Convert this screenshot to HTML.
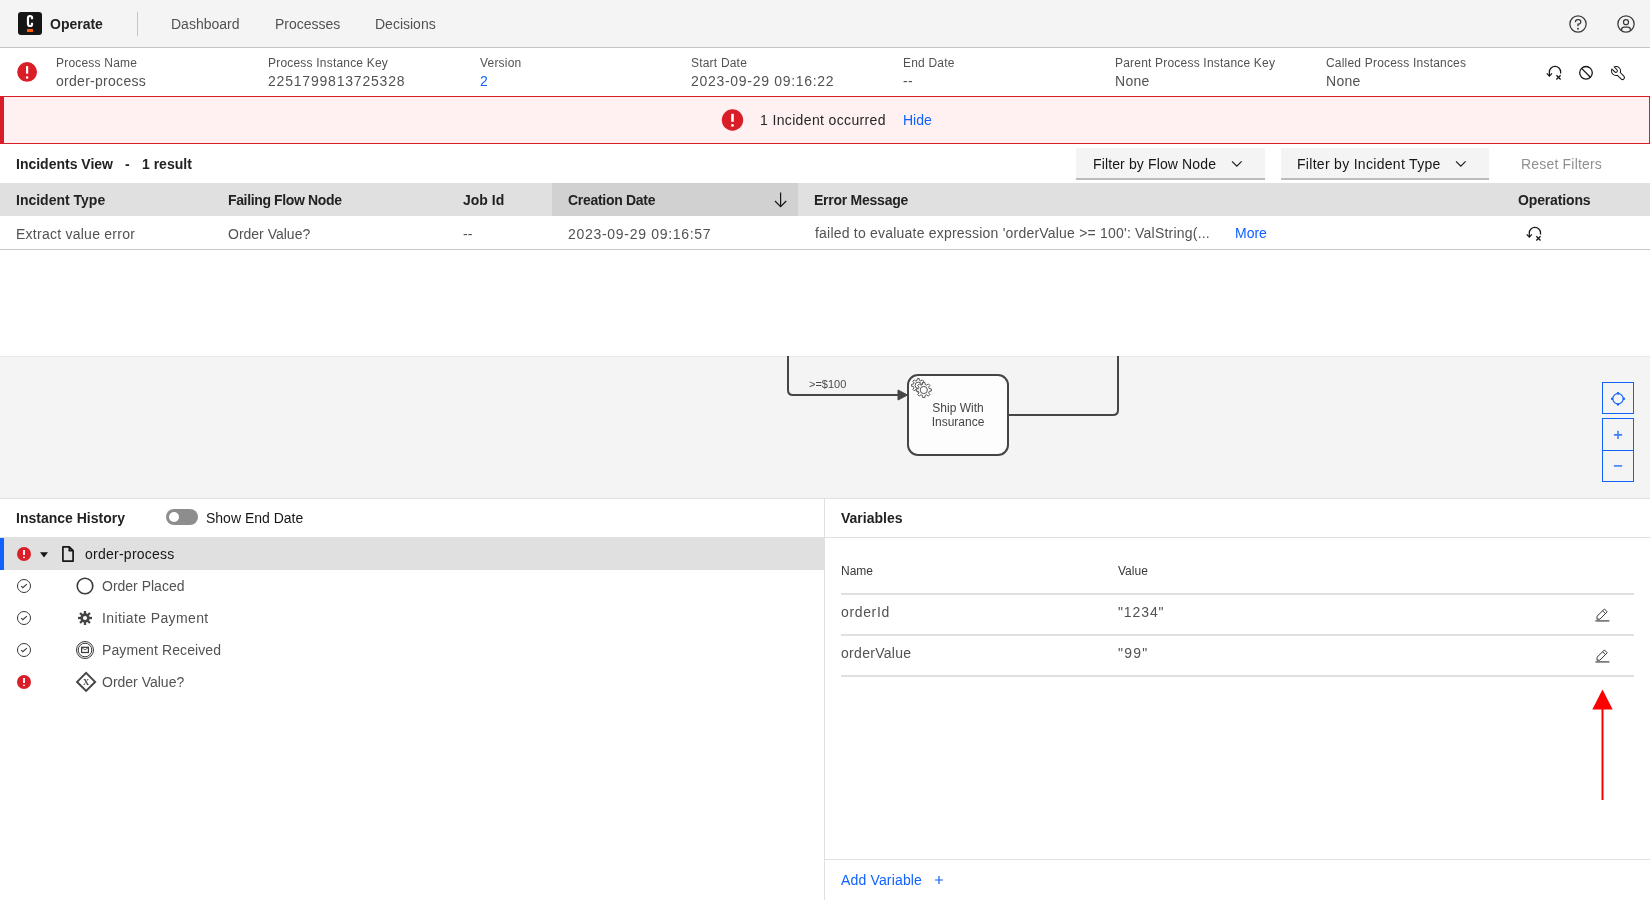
<!DOCTYPE html>
<html><head><meta charset="utf-8">
<style>
*{box-sizing:border-box;margin:0;padding:0}
html,body{width:1650px;height:900px;overflow:hidden;background:#fff;-webkit-font-smoothing:antialiased;font-family:"Liberation Sans",sans-serif;color:#161616}
.a{position:absolute;white-space:nowrap;line-height:1}
.s14{font-size:14px}
.s12{font-size:12px}
.b{font-weight:700;color:#222}
.g{color:#525252}
.lbl{color:#525252;font-size:12px;letter-spacing:0.2px}
.val{color:#525252;font-size:14px;letter-spacing:0.28px}
.dig{letter-spacing:0.7px}
.ls{letter-spacing:0.25px}
.nb{letter-spacing:-0.3px}
.link{color:#0f62fe}
svg{position:absolute;overflow:visible}
#root{position:absolute;left:0;top:0;width:1650px;height:900px;will-change:transform}
</style></head><body><div id="root">

<!-- HEADER -->
<div class="a" style="left:0;top:0;width:1650px;height:48px;background:#f4f4f4;border-bottom:1px solid #c6c6c6"></div>
<div class="a" style="left:18px;top:11.5px;width:24px;height:23.5px;background:#161616;border-radius:3px"></div>
<svg style="left:0;top:0" width="60" height="40"><path d="M32 19.2 V17.6 Q32 16 30 16 Q28 16 28 18 V24 Q28 26 30 26 Q32 26 32 24.4 V22.8" fill="none" stroke="#fff" stroke-width="2.2"/></svg>
<div class="a" style="left:27px;top:28.6px;width:6.2px;height:3.6px;background:#fc5d0d"></div>
<div class="a s14 b" style="left:50px;top:17px">Operate</div>
<div class="a" style="left:137px;top:12px;width:1px;height:24px;background:#c6c6c6"></div>
<div class="a s14" style="left:171px;top:17px;color:#525252">Dashboard</div>
<div class="a s14" style="left:275px;top:17px;color:#525252">Processes</div>
<div class="a s14" style="left:375px;top:17px;color:#525252">Decisions</div>

<!-- help icon -->
<svg style="left:1568px;top:14px" width="20" height="20" viewBox="0 0 32 32" fill="#393939"><path d="M16,2A14,14,0,1,0,30,16,14,14,0,0,0,16,2Zm0,26A12,12,0,1,1,28,16,12,12,0,0,1,16,28Z"/><circle cx="16" cy="23.5" r="1.5"/><path d="M17,8H15.5A4.49,4.49,0,0,0,11,12.5V13h2v-.5A2.5,2.5,0,0,1,15.5,10H17a2.5,2.5,0,0,1,0,5H15v4.5h2V17a4.5,4.5,0,0,0,0-9Z"/></svg>
<!-- user icon -->
<svg style="left:1616px;top:14px" width="20" height="20" viewBox="0 0 32 32" fill="#393939"><path d="M16,8a5,5,0,1,0,5,5A5,5,0,0,0,16,8Zm0,8a3,3,0,1,1,3-3A3.0034,3.0034,0,0,1,16,16Z"/><path d="M16,2A14,14,0,1,0,30,16,14.0158,14.0158,0,0,0,16,2ZM10,26.3765V25a3.0033,3.0033,0,0,1,3-3h6a3.0033,3.0033,0,0,1,3,3v1.3765a11.8989,11.8989,0,0,1-12,0Zm13.9925-1.4507A5.0016,5.0016,0,0,0,19,20H13a5.0016,5.0016,0,0,0-4.9925,4.9258,12,12,0,1,1,15.985,0Z"/></svg>

<!-- INSTANCE HEADER -->
<svg style="left:0;top:0" width="1650" height="900">
  <circle cx="27.1" cy="71.9" r="9.9" fill="#da1e28"/>
  <rect x="26" y="66.1" width="2.2" height="7.5" fill="#fff"/>
  <circle cx="27.1" cy="77.5" r="1.25" fill="#fff"/>
</svg>

<div class="a lbl" style="left:56px;top:57px">Process Name</div>
<div class="a val" style="left:56px;top:74px">order-process</div>
<div class="a lbl" style="left:268px;top:57px">Process Instance Key</div>
<div class="a val dig" style="left:268px;top:74px;letter-spacing:0.8px">2251799813725328</div>
<div class="a lbl" style="left:480px;top:57px">Version</div>
<div class="a val link" style="left:480px;top:74px">2</div>
<div class="a lbl" style="left:691px;top:57px">Start Date</div>
<div class="a val dig" style="left:691px;top:74px">2023-09-29 09:16:22</div>
<div class="a lbl" style="left:903px;top:57px">End Date</div>
<div class="a val" style="left:903px;top:74px">--</div>
<div class="a lbl" style="left:1115px;top:57px">Parent Process Instance Key</div>
<div class="a val" style="left:1115px;top:74px">None</div>
<div class="a lbl" style="left:1326px;top:57px">Called Process Instances</div>
<div class="a val" style="left:1326px;top:74px">None</div>

<!-- header operation icons -->
<svg style="left:0;top:0" width="1650" height="900" fill="none" stroke="#161616" stroke-width="1.3">
  <g>
    <path d="M1549.4 76 V72 A5.6 5.6 0 0 1 1560.6 72 V73.6" stroke-width="1.25"/>
    <path d="M1546.8 73.4 L1549.4 76.2 L1552 73.4" stroke-width="1.15"/>
    <path d="M1556.4 75.3 L1560.6 79.5 M1560.6 75.3 L1556.4 79.5" stroke-width="1.25"/>
  </g>
  <circle cx="1586" cy="72.8" r="6.3"/>
  <path d="M1581.6 68.4 L1590.4 77.2"/>
</svg>
<svg style="left:1610px;top:65px" width="16" height="16" viewBox="0 0 32 32" fill="#161616"><path d="M12.1,2A9.8,9.8,0,0,0,6.7,3.6L13.1,10a2.1,2.1,0,0,1,.2,3,2.1,2.1,0,0,1-3-.2L3.7,6.4A9.84,9.84,0,0,0,2,12.1,10.14,10.14,0,0,0,12.1,22.2a10.9,10.9,0,0,0,2.6-.3l6.7,6.7a5,5,0,0,0,7.1-7.1l-6.7-6.7a10.9,10.9,0,0,0,.3-2.6A10,10,0,0,0,12.1,2Zm8,10.1a7.610,7.610,0,0,1-.3,2.1l-.3,1.1.8.8L27,22.8a2.88,2.88,0,0,1,.9,2.1A2.72,2.72,0,0,1,27,27a2.9,2.9,0,0,1-4.2,0l-6.7-6.7-.8-.8-1.1.3a7.61,7.61,0,0,1-2.1.3,8.27,8.27,0,0,1-5.7-2.3A7.63,7.63,0,0,1,4,12.1a8.330,8.330,0,0,1,.3-2.2l4.4,4.4a4.14,4.14,0,0,0,5.9.2,4.14,4.14,0,0,0-.2-5.9L10,4.2a6.450,6.450,0,0,1,2-.3,8.27,8.27,0,0,1,5.7,2.3A8.49,8.49,0,0,1,20.1,12.1Z"/></svg>

<!-- INCIDENT BANNER -->
<div class="a" style="left:0;top:96px;width:1650px;height:48px;background:#fff1f1;border:1px solid #da1e28;border-left:4px solid #da1e28"></div>
<svg style="left:0;top:0" width="1650" height="900">
  <circle cx="732.5" cy="120" r="10.7" fill="#da1e28"/>
  <rect x="731.2" y="113.8" width="2.6" height="8" fill="#fff"/>
  <circle cx="732.5" cy="125.4" r="1.4" fill="#fff"/>
</svg>
<div class="a s14" style="left:760px;top:113px;color:#262626;letter-spacing:0.36px">1 Incident occurred</div>
<div class="a s14 link" style="left:903px;top:113px">Hide</div>

<!-- INCIDENTS VIEW -->
<div class="a s14 b" style="left:16px;top:157px">Incidents View</div><div class="a s14 b" style="left:125px;top:157px">-</div><div class="a s14 b" style="left:142px;top:157px">1 result</div>
<div class="a" style="left:1076px;top:148px;width:189px;height:32px;background:#f4f4f4;border-bottom:2px solid #bcbcbc"></div>
<div class="a s14" style="left:1093px;top:157px;color:#161616;letter-spacing:0.13px">Filter by Flow Node</div>
<div class="a" style="left:1281px;top:148px;width:208px;height:32px;background:#f4f4f4;border-bottom:2px solid #bcbcbc"></div>
<div class="a s14" style="left:1297px;top:157px;color:#161616;letter-spacing:0.3px">Filter by Incident Type</div>
<div class="a s14" style="left:1521px;top:157px;color:#909090;letter-spacing:0.19px">Reset Filters</div>
<svg style="left:0;top:0" width="1650" height="900" fill="none" stroke="#161616" stroke-width="1.1">
  <path d="M1232 161.3 L1236.8 166.1 L1241.6 161.3"/>
  <path d="M1456 161.3 L1460.8 166.1 L1465.6 161.3"/>
</svg>

<!-- TABLE -->
<div class="a" style="left:0;top:183px;width:1650px;height:33px;background:#e0e0e0"></div>
<div class="a" style="left:552px;top:183px;width:246px;height:33px;background:#d1d1d1"></div>
<div class="a s14 b" style="left:16px;top:193px">Incident Type</div>
<div class="a s14 b" style="left:228px;top:193px;letter-spacing:-0.36px">Failing Flow Node</div>
<div class="a s14 b" style="left:463px;top:193px">Job Id</div>
<div class="a s14 b" style="left:568px;top:193px;letter-spacing:-0.3px">Creation Date</div>
<div class="a s14 b" style="left:814px;top:193px;letter-spacing:-0.25px">Error Message</div>
<div class="a s14 b" style="left:1518px;top:193px;letter-spacing:-0.14px">Operations</div>
<svg style="left:0;top:0" width="1650" height="900" fill="none" stroke="#161616" stroke-width="1.2">
  <path d="M780.6 192.5 V206.5 M775 201 L780.6 206.6 L786.2 201"/>
</svg>

<div class="a" style="left:0;top:249px;width:1650px;height:1px;background:#c8c8c8"></div>
<div class="a s14 g ls" style="left:16px;top:227px">Extract value error</div>
<div class="a s14 g" style="left:228px;top:227px">Order Value?</div>
<div class="a s14 g" style="left:463px;top:227px">--</div>
<div class="a s14 g dig" style="left:568px;top:227px">2023-09-29 09:16:57</div>
<div class="a s14 g" style="left:815px;top:226px;letter-spacing:0.21px">failed to evaluate expression 'orderValue &gt;= 100': ValString(...</div>
<div class="a s14 link" style="left:1235px;top:226px">More</div>
<svg style="left:0;top:0" width="1650" height="900" fill="none" stroke="#161616" stroke-width="1.3">
  <g transform="translate(-20.1,161)">
    <path d="M1549.4 76 V72 A5.6 5.6 0 0 1 1560.6 72 V73.6" stroke-width="1.25"/>
    <path d="M1546.8 73.4 L1549.4 76.2 L1552 73.4" stroke-width="1.15"/>
    <path d="M1556.4 75.3 L1560.6 79.5 M1560.6 75.3 L1556.4 79.5" stroke-width="1.25"/>
  </g>
</svg>

<!-- DIAGRAM -->
<div class="a" style="left:0;top:356px;width:1650px;height:143px;background:#f4f4f4;border-bottom:1px solid #e0e0e0"></div>
<div class="a" style="left:0;top:356px;width:1650px;height:1px;background:#e9e9e9"></div>
<svg style="left:0;top:0" width="1650" height="900" fill="none" stroke="#454545" stroke-width="2">
  <path d="M788 356 V390 Q788 395 793 395 H899" stroke-linejoin="round"/>
  <path d="M898 390 L907.5 395 L898 400 Z" fill="#454545" stroke-width="1"/>
  <rect x="908" y="375" width="100" height="80" rx="10" ry="10" fill="#fdfdfd"/>
  <path d="M1008 415 H1113 Q1118 415 1118 410 V356" stroke-linejoin="round"/>
  <g stroke-width="0.9" fill="#fdfdfd" stroke="#454545">
    <path d="M923.14,384.06 L925.03,384.34 L925.03,386.26 L923.14,386.54 L922.60,387.85 L923.74,389.38 L922.38,390.74 L920.85,389.60 L919.54,390.14 L919.26,392.03 L917.34,392.03 L917.06,390.14 L915.75,389.60 L914.22,390.74 L912.86,389.38 L914.00,387.85 L913.46,386.54 L911.57,386.26 L911.57,384.34 L913.46,384.06 L914.00,382.75 L912.86,381.22 L914.22,379.86 L915.75,381.00 L917.06,380.46 L917.34,378.57 L919.26,378.57 L919.54,380.46 L920.85,381.00 L922.38,379.86 L923.74,381.22 L922.60,382.75Z"/>
    <circle cx="918.3" cy="385.3" r="3.2"/>
    <path d="M929.22,388.61 L931.32,388.93 L931.32,391.07 L929.22,391.39 L928.62,392.85 L929.88,394.56 L928.36,396.08 L926.65,394.82 L925.19,395.42 L924.87,397.52 L922.73,397.52 L922.41,395.42 L920.95,394.82 L919.24,396.08 L917.72,394.56 L918.98,392.85 L918.38,391.39 L916.28,391.07 L916.28,388.93 L918.38,388.61 L918.98,387.15 L917.72,385.44 L919.24,383.92 L920.95,385.18 L922.41,384.58 L922.73,382.48 L924.87,382.48 L925.19,384.58 L926.65,385.18 L928.36,383.92 L929.88,385.44 L928.62,387.15Z"/>
    <circle cx="923.8" cy="390" r="3.6"/>
  </g>
</svg>
<div class="a" style="left:809px;top:379px;font-size:11px;color:#4a4a4a">&gt;=$100</div>
<div class="a" style="left:908px;top:401px;width:100px;text-align:center;font-size:12px;line-height:14.4px;color:#454545;white-space:normal">Ship With<br>Insurance</div>

<!-- zoom controls -->
<div class="a" style="left:1602px;top:382px;width:32px;height:32px;border:1.5px solid #0f62fe"></div>
<div class="a" style="left:1602px;top:418px;width:32px;height:64px;border:1.5px solid #0f62fe"></div>
<div class="a" style="left:1602px;top:449.5px;width:32px;height:1px;background:#0f62fe"></div>
<svg style="left:0;top:0" width="1650" height="900" fill="none" stroke="#0f62fe" stroke-width="1.1">
  <circle cx="1618" cy="398.8" r="5.2"/>
  <g fill="#0f62fe" stroke="none"><circle cx="1618" cy="393.2" r="1.2"/><circle cx="1618" cy="404.4" r="1.2"/><circle cx="1612.1" cy="398.8" r="1.2"/><circle cx="1623.9" cy="398.8" r="1.2"/></g>
  <path d="M1618 430.8 V439 M1613.9 434.9 H1622.1" stroke-width="1.6" stroke="#3d7dff"/>
  <path d="M1613.9 465.9 H1622.1" stroke-width="1.6" stroke="#3d7dff"/>
</svg>

<!-- BOTTOM PANELS -->
<div class="a" style="left:824px;top:499px;width:1px;height:401px;background:#e0e0e0"></div>
<div class="a s14 b" style="left:16px;top:511px">Instance History</div>
<div class="a" style="left:166px;top:509.4px;width:32px;height:16px;border-radius:8px;background:#8d8d8d"></div>
<div class="a" style="left:168.8px;top:512.3px;width:10.2px;height:10.2px;border-radius:50%;background:#fff"></div>
<div class="a s14" style="left:206px;top:511px;color:#161616">Show End Date</div>

<div class="a" style="left:0;top:537px;width:824px;height:33px;background:#e0e0e0"></div>
<div class="a" style="left:0;top:538px;width:4px;height:32px;background:#0f62fe"></div>
<div class="a s14 ls" style="left:85px;top:547px;color:#161616">order-process</div>
<div class="a s14 g" style="left:102px;top:579px">Order Placed</div>
<div class="a s14 g" style="left:102px;top:611px;letter-spacing:0.39px">Initiate Payment</div>
<div class="a s14 g" style="left:102px;top:643px;letter-spacing:0.1px">Payment Received</div>
<div class="a s14 g" style="left:102px;top:675px">Order Value?</div>

<svg style="left:0;top:0" width="1650" height="900">
  <!-- error icons -->
  <circle cx="24" cy="554" r="7" fill="#da1e28"/>
  <rect x="23.1" y="550" width="1.8" height="5" fill="#fff"/><circle cx="24" cy="557.3" r="0.9" fill="#fff"/>
  <circle cx="24" cy="682" r="7" fill="#da1e28"/>
  <rect x="23.1" y="678" width="1.8" height="5" fill="#fff"/><circle cx="24" cy="685.3" r="0.9" fill="#fff"/>
  <!-- caret -->
  <path d="M40 552.2 H48 L44 557.4 Z" fill="#161616"/>
  <!-- doc icon -->
  <path d="M62.9 546.9 H69.3 L73.1 550.7 V561.1 H62.9 Z M69.3 547 V550.7 H73" fill="none" stroke="#161616" stroke-width="1.7" stroke-linejoin="round"/>
  <!-- checks -->
  <g fill="none" stroke="#393939" stroke-width="1">
    <circle cx="24" cy="586" r="6.5"/><path d="M21.2 586.1 L22.9 587.7 L26.8 584.1" stroke-width="1.1"/>
    <circle cx="24" cy="618" r="6.5"/><path d="M21.2 618.1 L22.9 619.7 L26.8 616.1" stroke-width="1.1"/>
    <circle cx="24" cy="650" r="6.5"/><path d="M21.2 650.1 L22.9 651.7 L26.8 648.1" stroke-width="1.1"/>
  </g>
  <!-- flow node icons -->
  <circle cx="85" cy="586" r="7.8" fill="none" stroke="#393939" stroke-width="1.6"/>
  <g fill="none" stroke="#393939">
    <circle cx="85" cy="650" r="8.5" stroke-width="1"/>
    <circle cx="85" cy="650" r="6.8" stroke-width="1"/>
    <rect x="81.6" y="647.3" width="6.8" height="5.2" stroke-width="1.2"/>
    <path d="M81.8 647.6 L85 650 L88.2 647.6" stroke-width="0.8"/>
    <path d="M86.1 672.9 L95.1 681.9 L86.1 690.9 L77.1 681.9 Z" stroke-width="2" stroke="#454545" stroke-linejoin="miter"/>
    <text x="86.1" y="684.8" font-family="Liberation Serif" font-size="8.6" font-weight="bold" text-anchor="middle" fill="#454545" stroke="none">X</text>
  </g>
  <!-- gear -->
  <g fill="#454545" transform="translate(85 618)">
    <circle r="4.7"/>
    <rect x="-1.15" y="-7" width="2.3" height="14"/>
    <rect x="-1.15" y="-7" width="2.3" height="14" transform="rotate(45)"/>
    <rect x="-1.15" y="-7" width="2.3" height="14" transform="rotate(90)"/>
    <rect x="-1.15" y="-7" width="2.3" height="14" transform="rotate(135)"/>
    <circle r="2.1" fill="#fff"/>
  </g>
</svg>

<div class="a s14 b" style="left:841px;top:511px">Variables</div>
<div class="a" style="left:825px;top:537px;width:825px;height:1px;background:#e0e0e0"></div>
<div class="a s12" style="left:841px;top:565px;color:#393939">Name</div>
<div class="a s12" style="left:1118px;top:565px;color:#393939">Value</div>
<div class="a" style="left:841px;top:593px;width:793px;height:2px;background:#e0e0e0"></div>
<div class="a" style="left:841px;top:634px;width:793px;height:2px;background:#e0e0e0"></div>
<div class="a" style="left:841px;top:675px;width:793px;height:2px;background:#e0e0e0"></div>
<div class="a s14 g" style="left:841px;top:605px;letter-spacing:0.65px">orderId</div>
<div class="a s14 g" style="left:1118px;top:605px;letter-spacing:0.9px">"1234"</div>
<div class="a s14 g" style="left:841px;top:646px;letter-spacing:0.3px">orderValue</div>
<div class="a s14 g" style="left:1118px;top:646px;letter-spacing:1.2px">"99"</div>
<svg style="left:0;top:0" width="1650" height="900" fill="none" stroke="#393939">
  <path d="M1595.4 620.9 H1609.4" stroke-width="1.6" stroke="#6f6f6f"/>
  <path d="M1597 619.2 V616.3 L1604.4 609 L1607.2 611.8 L1599.9 619.2 Z M1602.6 610.8 L1605.4 613.6" stroke-width="1"/>
  <path d="M1595.4 661.9 H1609.4" stroke-width="1.6" stroke="#6f6f6f"/>
  <path d="M1597 660.2 V657.3 L1604.4 650 L1607.2 652.8 L1599.9 660.2 Z M1602.6 651.8 L1605.4 654.6" stroke-width="1"/>
  <!-- red arrow -->
  <path d="M1602.5 706 V800" stroke="#ff0000" stroke-width="2"/>
  <path d="M1592.3 709.6 L1602.5 689.4 L1612.7 709.6 Z" fill="#ff0000" stroke="none"/>
</svg>

<div class="a" style="left:825px;top:859px;width:825px;height:1px;background:#e0e0e0"></div>
<div class="a s14 link" style="left:841px;top:873px;letter-spacing:0.16px">Add Variable</div>
<svg style="left:0;top:0" width="1650" height="900" fill="none" stroke="#0f62fe" stroke-width="1.2">
  <path d="M939 876 V884 M935 880 H943"/>
</svg>

</div></body></html>
